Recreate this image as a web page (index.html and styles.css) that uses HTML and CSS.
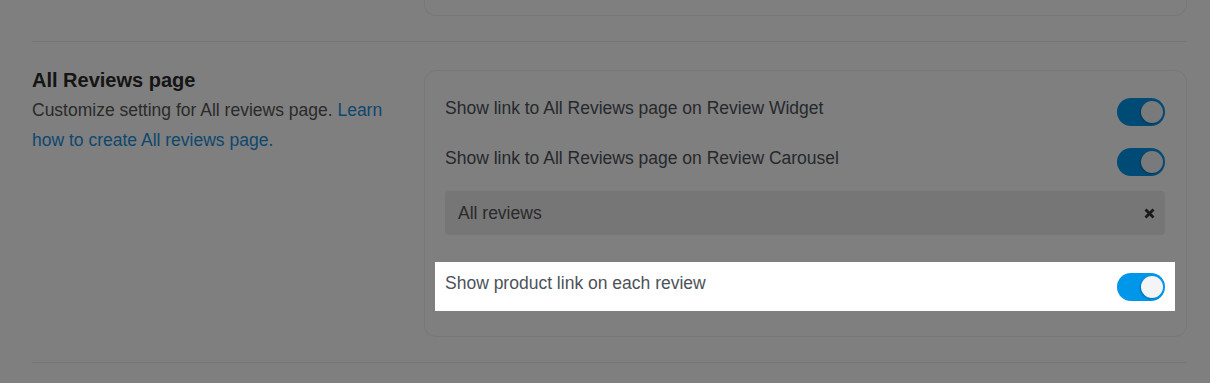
FILE: index.html
```html
<!DOCTYPE html>
<html lang="en">
<head>
    <meta charset="UTF-8">
    <meta name="viewport" content="width=device-width, initial-scale=1.0">
    <title>All Reviews page settings</title>
    <link rel="stylesheet" href="styles.css">
</head>
<body>
    <div class="page">
        <div class="section section-stub">
            <div></div>
            <div class="card card-stub"></div>
        </div>

        <div class="section">
            <div class="section-info">
                <h2>All Reviews page</h2>
                <p>Customize setting for All reviews page. <a href="#">Learn how to create All reviews page.</a></p>
            </div>

            <div class="card">
                <div class="setting-row">
                    <span class="setting-label">Show link to All Reviews page on Review Widget</span>
                    <span class="toggle"></span>
                </div>
                <div class="setting-row row-second">
                    <span class="setting-label">Show link to All Reviews page on Review Carousel</span>
                    <span class="toggle"></span>
                </div>
                <div class="select-box">
                    <span>All reviews</span>
                    <svg class="clear-icon" width="11" height="11" viewBox="0 0 11 11">
                        <path d="M1.5 1.5 L9.5 9.5 M9.5 1.5 L1.5 9.5" stroke="#333" stroke-width="2.8"/>
                    </svg>
                </div>
                <div class="setting-row highlight">
                    <span class="setting-label">Show product link on each review</span>
                    <span class="toggle"></span>
                </div>
            </div>
        </div>
    </div>

    <!-- tour backdrop, the highlighted row sits above it -->
    <div class="backdrop"></div>
</body>
</html>
```

FILE: styles.css
```css
body {
    margin: 0;
    background-color: #ffffff;
    font-family: "Liberation Sans", Arial, sans-serif;
    color: #333;
    overflow: hidden;
}

.page {
    padding: 0 23px 0 32px;
}

.section {
    display: grid;
    grid-template-columns: 360px 1fr;
    column-gap: 32px;
    padding: 28px 0 25px;
    border-bottom: 1px solid #ececec;
}

.section-stub {
    padding-top: 0;
}

.card {
    border: 1px solid #eeeeee;
    border-radius: 12px;
    padding: 25px 21px 25px 20px;
}

.card-stub {
    height: 15px;
    padding: 0;
    border-top: none;
    border-radius: 0 0 12px 12px;
}

.section-info h2 {
    margin: -2px 0 3px;
    font-size: 20px;
    line-height: 24px;
    font-weight: bold;
    color: #2a2a2a;
}

.section-info p {
    margin: 0;
    font-size: 17.5px;
    line-height: 30px;
    color: #555;
}

.section-info a {
    color: #1a8fdc;
    text-decoration: none;
}

.setting-row {
    display: flex;
    justify-content: space-between;
    align-items: flex-start;
}

.row-second {
    margin-top: 20px;
}

.setting-label {
    font-size: 17.5px;
    line-height: 24px;
    color: #4d5259;
}

.toggle {
    display: flex;
    justify-content: flex-end;
    align-items: center;
    box-sizing: border-box;
    width: 48px;
    height: 28px;
    margin-top: 2px;
    padding-right: 2px;
    border-radius: 14px;
    background-color: #0096ea;
}

.toggle::after {
    content: "";
    width: 22px;
    height: 22px;
    border-radius: 50%;
    background-color: #f3f4f6;
    box-shadow: -1px 1px 2px rgba(0, 0, 0, 0.25);
}

.select-box {
    display: flex;
    justify-content: space-between;
    align-items: center;
    height: 44px;
    margin-top: 15px;
    padding: 0 10px 0 13px;
    border-radius: 4px;
    background-color: #ececec;
    font-size: 17.5px;
    color: #555;
}

.backdrop {
    position: fixed;
    top: 0;
    right: 0;
    bottom: 0;
    left: 0;
    z-index: 1;
    background-color: rgba(0, 0, 0, 0.5);
}

.highlight {
    position: relative;
    z-index: 2;
    margin: 27px -10px 0;
    padding: 9px 10px 10px;
    background-color: #ffffff;
}
```
